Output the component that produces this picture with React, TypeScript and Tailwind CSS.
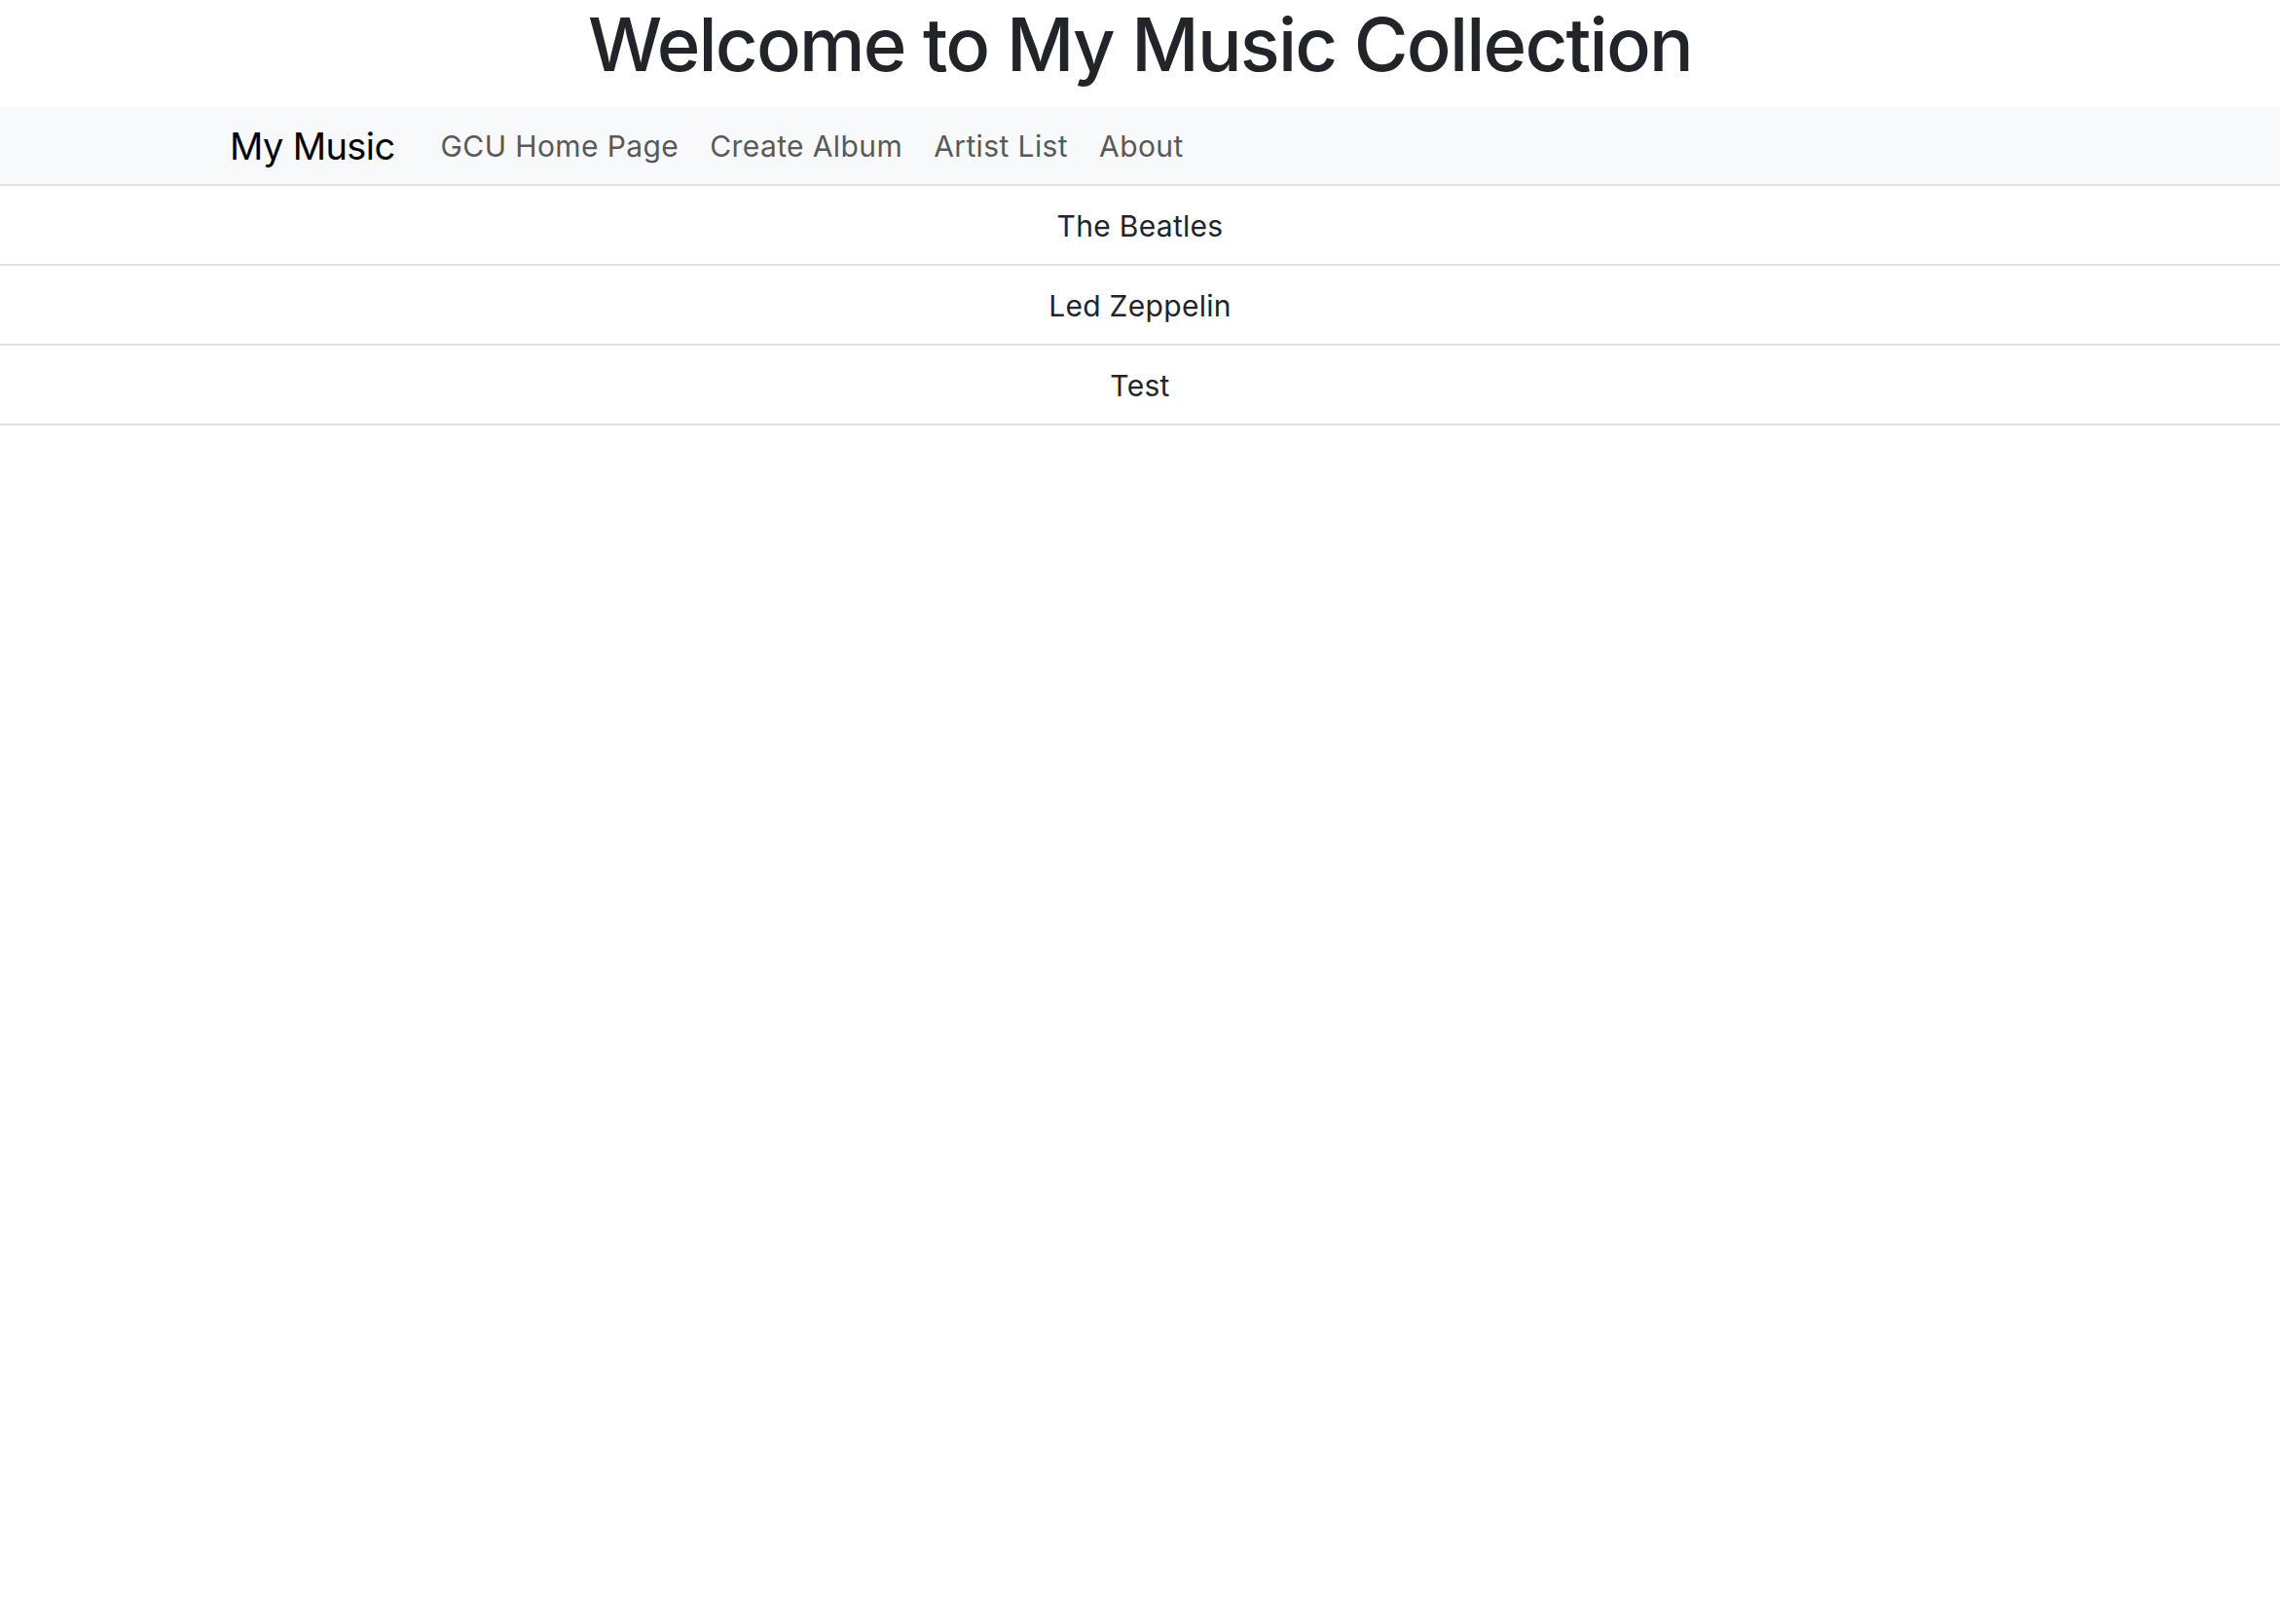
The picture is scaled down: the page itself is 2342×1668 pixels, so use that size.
import React from "react";

const NAV_LINKS = ["GCU Home Page", "Create Album", "Artist List", "About"];
const ARTISTS = ["The Beatles", "Led Zeppelin", "Test"];

export default function App() {
  return (
    <div className="min-h-screen bg-white font-['Inter','Liberation_Sans',sans-serif] text-[#212529]">
      {/* Page heading */}
      <header className="h-[109px] pt-[7px] text-center">
        <h1 className="text-[76px] leading-[76px] font-medium tracking-[-1.8px]">
          Welcome to My Music Collection
        </h1>
      </header>

      {/* Navbar */}
      <nav className="h-[82px] pt-[3px] bg-[#f8f9fa] border-b-2 border-[#dee2e6] flex items-center pl-[236px]">
        <span className="text-[38px] tracking-[-0.6px] text-black mr-[31px]">My Music</span>
        <ul className="flex items-center">
          {NAV_LINKS.map((link) => (
            <li key={link} className="px-[16px] text-[30px] tracking-[0.4px] text-[#595959]">
              {link}
            </li>
          ))}
        </ul>
      </nav>

      {/* Artist list */}
      <ul>
        {ARTISTS.map((name) => (
          <li
            key={name}
            className="h-[82px] pt-[3px] border-b-2 border-[#dee2e6] flex items-center justify-center text-[30px] tracking-[0.3px]"
          >
            {name}
          </li>
        ))}
      </ul>
    </div>
  );
}
